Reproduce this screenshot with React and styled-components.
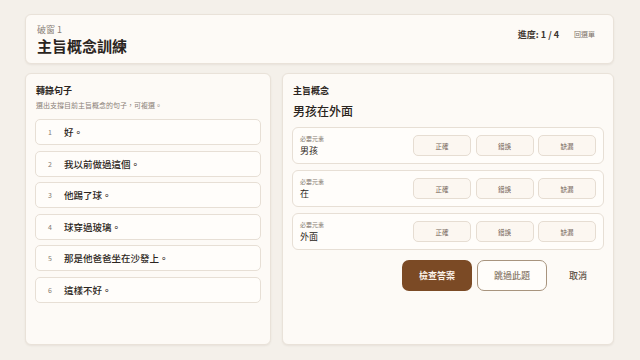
import React from 'react';
import styled, { createGlobalStyle } from 'styled-components';

const GlobalStyle = createGlobalStyle`
    html, body {
        margin: 0;
        padding: 0;
        background: #f4f0ea;
        font-family: "Noto Sans CJK TC", "Noto Sans", sans-serif;
        color: #2b2520;
    }
    * { box-sizing: border-box; }
`

const Page = styled.div`
    height: 100vh;
    padding: 14px 26px 15px 25px;
    display: flex;
    flex-direction: column;
    gap: 9px;
`

const Card = styled.div`
    background: #fdfaf6;
    border: 1px solid #e9e2d9;
    border-radius: 6px;
    box-shadow: 0 1px 2px rgba(90, 70, 40, 0.08);
`

const Header = styled(Card)`
    height: 50px;
    padding: 8px 18px 8px 11px;
    display: flex;
    justify-content: space-between;
    align-items: flex-start;
`

const Crumb = styled.div`
    font-size: 9px;
    line-height: 14px;
    color: #8b8178;
`

const Title = styled.h1`
    margin: 0;
    font-size: 15px;
    line-height: 18px;
    font-weight: 700;
    color: #2a2420;
`

const HeaderRight = styled.div`
    display: flex;
    align-items: center;
    gap: 15px;
    height: 22px;
`

const Progress = styled.span`
    font-size: 9px;
    font-weight: 700;
    color: #3e3630;
`

const MenuLink = styled.span`
    font-size: 7px;
    color: #7d736a;
`

const Columns = styled.div`
    flex: 1;
    display: grid;
    grid-template-columns: 246px 1fr;
    gap: 11px;
    min-height: 0;
`

const Panel = styled(Card)`
    padding: 10px 9px;
    display: flex;
    flex-direction: column;
`

const PanelHeading = styled.h2`
    margin: 0 0 0 1px;
    font-size: 9px;
    line-height: 14px;
    font-weight: 700;
    color: #2a2420;
`

const Hint = styled.p`
    margin: 2px 0 0 1px;
    font-size: 7px;
    line-height: 11px;
    color: #8b8178;
`

const SentenceList = styled.div`
    margin-top: 8px;
    display: flex;
    flex-direction: column;
    gap: 5.6px;
`

const Sentence = styled.div`
    height: 26px;
    padding: 0 12px;
    display: flex;
    align-items: center;
    background: #fffdfa;
    border: 1px solid #e7dfd5;
    border-radius: 5px;
`

const Num = styled.span`
    width: 16px;
    font-size: 7px;
    color: #857a70;
`

const SentenceText = styled.span`
    font-size: 9.5px;
    font-weight: 500;
    color: #2b2520;
`

const Concept = styled.div`
    margin: 4px 0 0 1px;
    font-size: 12px;
    line-height: 18px;
    font-weight: 500;
    color: #2a2420;
`

const ElementList = styled.div`
    margin-top: 7px;
    display: flex;
    flex-direction: column;
    gap: 6px;
`

const ElementRow = styled.div`
    height: 37px;
    padding: 0 7px 0 7px;
    display: flex;
    align-items: center;
    background: #fffdfa;
    border: 1px solid #e7dfd5;
    border-radius: 6px;
`

const ElementInfo = styled.div`
    flex: 1;
    display: flex;
    flex-direction: column;
    gap: 2px;
`

const ElementLabel = styled.span`
    font-size: 6px;
    line-height: 9px;
    color: #857a70;
`

const ElementValue = styled.span`
    font-size: 9px;
    line-height: 12px;
    color: #2b2520;
`

const Choices = styled.div`
    display: flex;
    gap: 4.5px;
`

const Choice = styled.button`
    width: 58px;
    height: 21px;
    padding: 0;
    font-family: inherit;
    font-size: 6.5px;
    color: #76665a;
    background: #fcf7f1;
    border: 1px solid #e6ddd2;
    border-radius: 5px;
`

const Actions = styled.div`
    margin-top: 10px;
    display: flex;
    justify-content: flex-end;
    gap: 5px;
`

const ActionButton = styled.button`
    width: ${p => (p.$text ? '52px' : '70px')};
    height: 31px;
    padding: 0;
    font-family: inherit;
    font-size: 9px;
    font-weight: ${p => (p.$primary ? 700 : 500)};
    border-radius: 7px;
    color: ${p => (p.$primary ? '#fbf3ea' : p.$text ? '#5f5247' : '#8a7a6a')};
    background: ${p => (p.$primary ? '#7b4a25' : p.$text ? 'transparent' : '#fffdfa')};
    border: ${p => (p.$primary || p.$text ? '1px solid transparent' : '1px solid #a8947e')};
`

const sentences = [
    '好。',
    '我以前做過這個。',
    '他踢了球。',
    '球穿過玻璃。',
    '那是他爸爸坐在沙發上。',
    '這樣不好。',
];

const elements = ['男孩', '在', '外面'];

export default function App() {
    return (
        <>
            <GlobalStyle />
            <Page>
                <Header>
                    <div>
                        <Crumb>破窗 1</Crumb>
                        <Title>主旨概念訓練</Title>
                    </div>
                    <HeaderRight>
                        <Progress>進度: 1 / 4</Progress>
                        <MenuLink>回選單</MenuLink>
                    </HeaderRight>
                </Header>
                <Columns>
                    <Panel>
                        <PanelHeading>轉錄句子</PanelHeading>
                        <Hint>選出支撐目前主旨概念的句子，可複選。</Hint>
                        <SentenceList>
                            {sentences.map((s, i) => (
                                <Sentence key={i}>
                                    <Num>{i + 1}</Num>
                                    <SentenceText>{s}</SentenceText>
                                </Sentence>
                            ))}
                        </SentenceList>
                    </Panel>
                    <Panel>
                        <PanelHeading>主旨概念</PanelHeading>
                        <Concept>男孩在外面</Concept>
                        <ElementList>
                            {elements.map(el => (
                                <ElementRow key={el}>
                                    <ElementInfo>
                                        <ElementLabel>必要元素</ElementLabel>
                                        <ElementValue>{el}</ElementValue>
                                    </ElementInfo>
                                    <Choices>
                                        <Choice>正確</Choice>
                                        <Choice>錯誤</Choice>
                                        <Choice>缺漏</Choice>
                                    </Choices>
                                </ElementRow>
                            ))}
                        </ElementList>
                        <Actions>
                            <ActionButton $primary>檢查答案</ActionButton>
                            <ActionButton>跳過此題</ActionButton>
                            <ActionButton $text>取消</ActionButton>
                        </Actions>
                    </Panel>
                </Columns>
            </Page>
        </>
    );
}
